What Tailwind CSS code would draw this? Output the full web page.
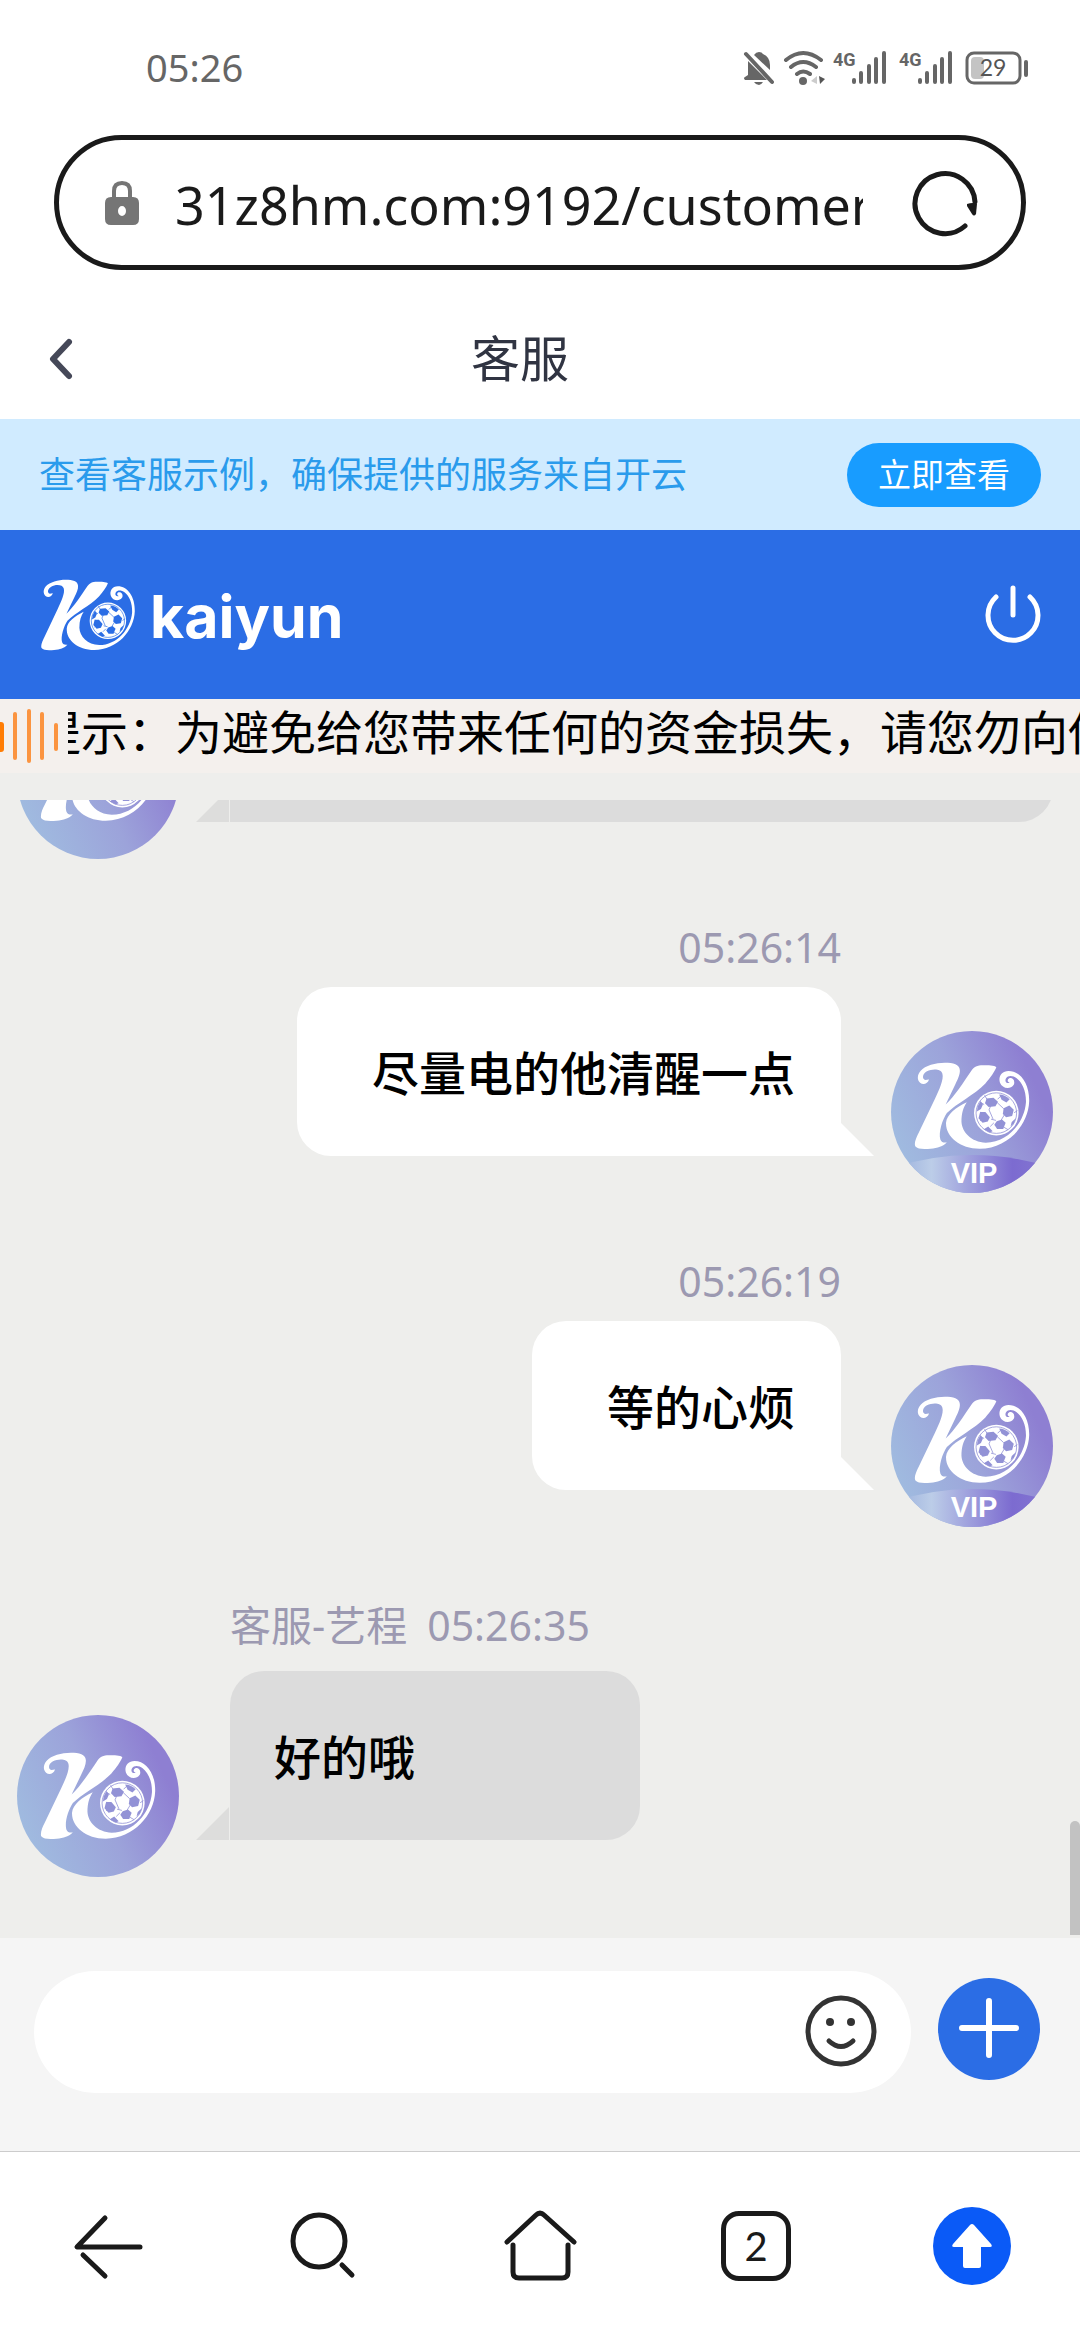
<!DOCTYPE html>
<html lang="zh-CN">
<head>
    <meta charset="UTF-8">
    <meta name="viewport" content="width=device-width, initial-scale=1.0">
    <title>客服</title>
    <script src="https://cdn.jsdelivr.net/npm/@tailwindcss/browser@4"></script>
</head>
<body class="flex h-screen flex-col overflow-hidden bg-white font-['Noto_Sans','Noto_Sans_CJK_SC',sans-serif] text-black">

    <!-- Shared shapes -->
    <svg class="absolute size-0" aria-hidden="true">
        <defs>
            <linearGradient id="avatarFill" x1="0" y1="0.75" x2="1" y2="0.3">
                <stop offset="0" stop-color="#a0bde0"/>
                <stop offset="0.5" stop-color="#9ca3da"/>
                <stop offset="0.9" stop-color="#8e7fd2"/>
            </linearGradient>
            <linearGradient id="vipFill" x1="0" y1="0" x2="1" y2="0">
                <stop offset="0.1" stop-color="#a5b9e0"/>
                <stop offset="0.25" stop-color="#bccde8"/>
                <stop offset="0.75" stop-color="#7c6bd0"/>
                <stop offset="1" stop-color="#8577d2"/>
            </linearGradient>
            <clipPath id="avatarClip"><circle cx="81" cy="81" r="81"/></clipPath>
            <symbol id="emblem" viewBox="60 58 286 217">
                <g fill="#fff">
                    <path d="M97 101C94 112 82 115 75 109C67 102 68 89 76 80C88 67 113 60 136 60C157 60 172 64 173 78C174 88 168 101 162 113L138 163C160 142 182 108 201 80C208 70 216 66 230 66C243 66 258 66 263 71C259 82 248 97 236 111C208 140 166 159 141 184C130 200 120 232 125 249C128 257 135 257 141 256C132 266 118 271 101 272C86 273 69 274 63 266C60 257 66 244 71 234L112 148C122 127 134 101 130 87C127 74 105 74 92 81C83 86 80 95 84 100C88 105 93 100 97 101Z"/>
                    <path d="M190 157C163 170 141 187 139 207C137 241 172 272 222 272C291 271 342 214 344 155C345 111 322 80 293 80C276 80 267 95 272 109C277 123 297 127 306 114C310 105 304 96 295 98C290 100 289 108 296 109C287 112 283 105 287 98C292 90 304 91 313 98C327 109 337 130 336 158C332 209 290 257 237 257C201 256 178 231 177 205C177 184 182 169 190 157Z"/>
                    <circle cx="263" cy="184" r="55"/>
                </g>
                <g fill="none" stroke="currentColor">
                    <circle cx="263" cy="184" r="50" stroke-width="2"/>
                    <path d="M250 164L245 176L255 199M265 158L281 173M250 199L262 202M233 163L222 156M234 140L240 150M266 150L275 141M283 188L275 201M282 219L292 225M257 208L248 217M223 203L235 194M307 183L315 178M233 193L225 181" stroke-width="2"/>
                </g>
                <g fill="currentColor">
                    <path d="M239 148L256 146L267 156L261 167L244 169L235 160Z"/>
                    <path d="M281 172L295 165L306 176L302 191L287 194L279 186Z"/>
                    <path d="M264 204L277 200L286 208L280 223L265 223L258 213Z"/>
                    <path d="M223 181L236 181L247 194L242 205L229 208L219 197Z"/>
                    <path d="M270 138Q284 138 296 150L288 158L276 151Z"/>
                    <path d="M217 167L224 154L230 163L225 174L215 180Z"/>
                    <path d="M232 224L243 217L254 229L246 232Z"/>
                    <path d="M311 197L301 206L298 217L306 210Z"/>
                </g>
            </symbol>
            <symbol id="avatar" viewBox="0 0 162 162">
                <circle cx="81" cy="81" r="81" fill="url(#avatarFill)"/>
                <use href="#emblem" x="23" y="37" width="116" height="88" color="#9292d6"/>
            </symbol>
            <symbol id="avatarVip" viewBox="0 0 162 162">
                <circle cx="81" cy="81" r="81" fill="url(#avatarFill)"/>
                <path d="M0 137Q81 111 162 137V162H0Z" fill="url(#vipFill)" clip-path="url(#avatarClip)"/>
                <use href="#emblem" x="23" y="31" width="116" height="88" color="#9292d6"/>
                <text x="83" y="152" text-anchor="middle" font-family="Liberation Sans" font-weight="700" font-size="29" fill="#fff">VIP</text>
            </symbol>
            <symbol id="signal" viewBox="0 0 54 36">
                <text x="0" y="16" font-family="Roboto" font-weight="700" font-size="18" fill="#666">4G</text>
                <g stroke="#666" stroke-width="4" stroke-linecap="round">
                    <path d="M21 30V32M28 23V32M36 16V32M43 9V32M51 3V32"/>
                </g>
            </symbol>
        </defs>
    </svg>

    <!-- Status bar -->
    <div class="flex h-[135px] shrink-0 items-center justify-between pr-[51px] pl-[146px] text-[38px] text-[#666]">
        <span>05:26</span>
        <div class="flex items-center gap-2">
            <svg class="h-9 w-8" viewBox="0 0 32 36" fill="#666">
                <path d="M11 5Q13 2 16 2Q19 2 20 4Q27 7 27 15V20ZM5 11L24 30H2Q0 28 2 27L5 25ZM11 32H20Q18 35 16 35Q13 35 11 32Z"/>
                <path d="M3 4L29 32" fill="none" stroke="#666" stroke-width="4" stroke-linecap="round"/>
            </svg>
            <svg class="h-9 w-[42px]" viewBox="0 0 42 36" fill="none" stroke="#666" stroke-width="4" stroke-linecap="round">
                <path d="M3 10Q20 -4 38 10M8 17Q20 7 33 17M14 24Q20 19 27 24"/>
                <circle cx="20" cy="31" r="4" fill="#666" stroke="none"/>
                <path d="M34 26V34L28 31Z" fill="#ccc" stroke="none"/>
                <path d="M36 26L42 29L37 34Z" fill="#555" stroke="none"/>
            </svg>
            <svg class="h-9 w-[54px]"><use href="#signal"/></svg>
            <svg class="ml-1 h-9 w-[54px]"><use href="#signal"/></svg>
            <svg class="ml-1 h-9 w-16" viewBox="0 0 64 36">
                <rect x="2" y="3" width="53" height="30" rx="7" fill="none" stroke="#666" stroke-width="3"/>
                <rect x="6" y="7" width="13" height="22" rx="4" fill="#c4c4c4"/>
                <rect x="59" y="10" width="4" height="17" rx="2" fill="#666"/>
                <text x="28" y="26" text-anchor="middle" font-family="Lato" font-size="23" fill="#555">29</text>
            </svg>
        </div>
    </div>

    <!-- Address bar -->
    <div class="mx-[54px] flex h-[135px] shrink-0 items-center rounded-full border-5 border-[#1a1a1a] pr-10 pl-[46px]">
        <svg class="h-[46px] w-[34px] shrink-0" viewBox="0 0 34 46" fill="none">
            <path d="M9 18V11Q9 3 17 3Q25 3 25 11V18" stroke="#757575" stroke-width="4"/>
            <path fill="#757575" fill-rule="evenodd" d="M6 17H28Q34 17 34 23V39Q34 45 28 45H6Q0 45 0 39V23Q0 17 6 17ZM17 26A4 5 0 1 0 17 36A4 5 0 1 0 17 26Z"/>
        </svg>
        <input type="text" aria-label="网址" value="31z8hm.com:9192/customer" class="ml-9 min-w-0 flex-1 overflow-hidden pt-1 text-[52px] text-[#1a1a1a] outline-none">
        <button aria-label="刷新" class="ml-12 shrink-0">
            <svg class="size-[70px]" viewBox="0 0 70 70" fill="none">
                <path d="M54 58A30 30 0 1 1 64 34" stroke="#1a1a1a" stroke-width="5" stroke-linecap="round"/>
                <path d="M56 36Q62 34 66 36L65 46Q63 49 61 46L56 38Z" fill="#1a1a1a"/>
            </svg>
        </button>
    </div>

    <!-- Page title -->
    <div class="mt-[29px] flex h-[120px] shrink-0 items-center pr-[120px]">
        <button aria-label="返回" class="flex h-full w-20 items-center pl-[46px]">
            <svg class="h-11 w-7" viewBox="0 0 28 44" fill="none">
                <path d="M23 5L7 22L23 39" stroke="#454858" stroke-width="6" stroke-linecap="round" stroke-linejoin="round"/>
            </svg>
        </button>
        <h1 class="flex-1 text-center text-[49px] text-[#303442]">客服</h1>
    </div>

    <!-- Verification banner -->
    <div class="flex h-[111px] shrink-0 items-center justify-between bg-[#d0ebff] pr-[39px] pl-[39px]">
        <span class="text-[36px] text-[#2a9bec]">查看客服示例，确保提供的服务来自开云</span>
        <button class="h-16 w-[194px] rounded-full bg-[#189cff] text-[33px] leading-[64px] text-white">立即查看</button>
    </div>

    <!-- Brand header -->
    <header class="flex h-[169px] shrink-0 items-center justify-between bg-[#2b6de5] pr-9 pl-10 text-[#2b6de5]">
        <div class="flex items-center gap-[14px]">
            <svg class="h-[72px] w-[96px]"><use href="#emblem"/></svg>
            <span class="pt-1 font-[Inter] text-[59px] leading-[72px] font-bold text-white">kaiyun</span>
        </div>
        <button aria-label="退出">
            <svg class="size-16" viewBox="0 0 64 64" fill="none" stroke="#fff" stroke-width="5" stroke-linecap="round">
                <path d="M16 14A25 25 0 1 0 50 14M33 5V32"/>
            </svg>
        </button>
    </header>

    <!-- Scrolling notice -->
    <div class="flex h-[74px] shrink-0 bg-[#f4f0ed]">
        <svg class="h-[74px] w-[68px] shrink-0" viewBox="0 0 68 74" stroke-linecap="round" stroke-width="4">
            <path d="M1 26V50" stroke="#ff7d05" stroke-width="6"/>
            <path d="M15 15V59M29 12V62M42 15V59M56 26V50" stroke="#fb9440"/>
        </svg>
        <div class="min-w-0 flex-1 overflow-hidden">
            <p class="-ml-[34px] text-[47px] leading-[66px] whitespace-nowrap">提示：为避免给您带来任何的资金损失，请您勿向他</p>
        </div>
    </div>

    <!-- Conversation -->
    <main class="flex min-h-0 flex-1 flex-col bg-[#eeeeec] pt-[27px]">
        <div class="relative flex min-h-0 flex-1 flex-col justify-end gap-[58px] overflow-hidden px-[27px] pb-[61px]">
            <div class="-ml-[10px] flex shrink-0 items-end">
                <svg class="size-[162px] shrink-0"><use href="#avatar"/></svg>
                <svg class="mb-[37px] ml-[17px] size-[33px] shrink-0" viewBox="0 0 33 33"><path d="M33 0V33H0Z" fill="#dddddc"/></svg>
                <div class="mb-[37px] ml-px h-[169px] flex-1 rounded-[34px] rounded-bl-none bg-[#dcdcdc]"></div>
            </div>

            <div class="flex shrink-0 items-end justify-end">
                <div class="mb-[37px] flex flex-col items-end">
                    <time class="mb-[10px] text-[41px] leading-[60px] text-[#9c99b1]">05:26:14</time>
                    <p class="rounded-[34px] rounded-br-none bg-white pt-1 pr-[46px] pl-[75px] text-[47px] leading-[165px] font-medium">尽量电的他清醒一点</p>
                </div>
                <svg class="mr-[17px] mb-[37px] size-[33px] shrink-0" viewBox="0 0 33 33"><path d="M0 0V33H33Z" fill="#fff"/></svg>
                <svg class="size-[162px] shrink-0"><use href="#avatarVip"/></svg>
            </div>

            <div class="flex shrink-0 items-end justify-end">
                <div class="mb-[37px] flex flex-col items-end">
                    <time class="mb-[10px] text-[41px] leading-[60px] text-[#9c99b1]">05:26:19</time>
                    <p class="rounded-[34px] rounded-br-none bg-white pt-1 pr-[46px] pl-[75px] text-[47px] leading-[165px] font-medium">等的心烦</p>
                </div>
                <svg class="mr-[17px] mb-[37px] size-[33px] shrink-0" viewBox="0 0 33 33"><path d="M0 0V33H33Z" fill="#fff"/></svg>
                <svg class="size-[162px] shrink-0"><use href="#avatarVip"/></svg>
            </div>

            <div class="-ml-[10px] flex shrink-0 items-end pt-[10px]">
                <svg class="size-[162px] shrink-0"><use href="#avatar"/></svg>
                <svg class="mb-[37px] ml-[17px] size-[33px] shrink-0" viewBox="0 0 33 33"><path d="M33 0V33H0Z" fill="#dddddc"/></svg>
                <div class="mb-[37px] ml-px">
                    <div class="mb-4 flex gap-5 text-[41px] leading-[60px] text-[#9c99b1]">
                        <span>客服-艺程</span>
                        <time>05:26:35</time>
                    </div>
                    <p class="min-w-[410px] rounded-[34px] rounded-bl-none bg-[#dcdcdc] px-11 pt-1 text-[47px] leading-[165px] font-medium">好的哦</p>
                </div>
            </div>

            <div class="absolute right-0 bottom-[3px] h-[114px] w-[10px] rounded-t-full bg-[#c2c2c2]"></div>
        </div>
    </main>

    <!-- Message composer -->
    <footer class="flex h-[213px] shrink-0 items-start bg-[#f5f5f5] pt-[33px] pr-10 pl-[34px]">
        <div class="flex h-[122px] flex-1 items-center rounded-full bg-white pr-8 pl-12">
            <input type="text" aria-label="输入消息" class="min-w-0 flex-1 text-[47px] outline-none">
            <button aria-label="表情" class="shrink-0">
                <svg class="size-[76px]" viewBox="0 0 76 76" fill="none" stroke="#333" stroke-width="5" stroke-linecap="round">
                    <circle cx="38" cy="37" r="33"/>
                    <path d="M26 47Q38 58 50 47"/>
                    <g fill="#333" stroke="none">
                        <circle cx="27" cy="28" r="4"/>
                        <circle cx="48" cy="28" r="4"/>
                    </g>
                </svg>
            </button>
        </div>
        <button aria-label="更多" class="mt-[7px] ml-[27px] size-[102px] shrink-0 rounded-full bg-[#2b6de5]">
            <svg class="size-full" viewBox="0 0 102 102" stroke="#fff" stroke-width="6" stroke-linecap="round">
                <path d="M24 50H78M51 23V77"/>
            </svg>
        </button>
    </footer>

    <!-- Browser toolbar -->
    <nav class="grid h-[189px] shrink-0 grid-cols-5 place-items-center border-t border-[#ccc] bg-white">
        <button aria-label="后退">
            <svg class="size-20" viewBox="0 0 80 80" fill="none" stroke="#1a1a1a" stroke-width="5" stroke-linecap="round" stroke-linejoin="round">
                <path d="M37 12L9 41H72M15 49L37 70"/>
            </svg>
        </button>
        <button aria-label="搜索">
            <svg class="size-20" viewBox="0 0 80 80" fill="none" stroke="#1a1a1a" stroke-width="5" stroke-linecap="round">
                <circle cx="35" cy="35" r="26"/>
                <path d="M58 59L68 69"/>
            </svg>
        </button>
        <button aria-label="主页">
            <svg class="size-20" viewBox="0 0 80 80" fill="none" stroke="#1a1a1a" stroke-width="5" stroke-linecap="round" stroke-linejoin="round">
                <path d="M7 36L36 9Q40 5 44 9L74 36M13 39V66Q13 72 19 72H62Q68 72 68 66V39"/>
            </svg>
        </button>
        <button aria-label="标签页" class="size-[70px] rounded-[18px] border-5 border-[#1a1a1a] font-[Lato] text-[40px] leading-[60px] text-[#1a1a1a]">2</button>
        <button aria-label="上滑">
            <svg class="size-20" viewBox="0 0 80 80">
                <circle cx="40" cy="40" r="39" fill="#0a5af7"/>
                <path d="M38 19Q40 17 42 19L59 38Q61 41 58 41H49V60Q49 62 47 62H33Q31 62 31 60V41H22Q19 41 21 38Z" fill="#fff"/>
            </svg>
        </button>
    </nav>

</body>
</html>
